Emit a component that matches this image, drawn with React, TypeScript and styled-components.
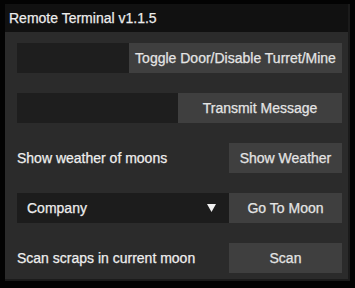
import styled, { createGlobalStyle } from "styled-components";

const GlobalStyle = createGlobalStyle`
  html, body {
    margin: 0;
    padding: 0;
    background: #030303;
  }
  body {
    font-family: "Liberation Sans", Arial, Helvetica, sans-serif;
    -webkit-text-stroke: 0.25px currentColor;
  }
`;

const Page = styled.div`
  width: 355px;
  height: 288px;
  padding: 4px 0 0 5px;
  box-sizing: border-box;
`;

const Window = styled.div`
  width: 343px;
  border-right: 2px solid #1b1b1b;
  border-bottom: 2px solid #1b1b1b;
  display: flex;
  flex-direction: column;
`;

const TitleBar = styled.div`
  height: 28px;
  background: #111111;
  color: #ececec;
  font-size: 14px;
  line-height: 16px;
  display: flex;
  align-items: center;
  padding-left: 4px;
`;

const Panel = styled.div`
  background: #2b2b2b;
  padding: 11px 6px 6px 12px;
  display: flex;
  flex-direction: column;
  gap: 20px;
`;

const Row = styled.div`
  display: flex;
  height: 30px;
  align-items: stretch;
`;

const Field = styled.div`
  flex: 1;
  background: #1e1e1e;
`;

const Button = styled.button<{ $w: number }>`
  width: ${(p) => p.$w}px;
  flex: none;
  border: none;
  margin: 0;
  padding: 0;
  background: #3f3f3f;
  color: #e4e4e4;
  font-family: inherit;
  font-size: 14px;
  line-height: 16px;
  text-align: center;
  white-space: nowrap;
  cursor: pointer;
`;

const Label = styled.div`
  flex: 1;
  display: flex;
  align-items: center;
  color: #eeeeee;
  font-size: 14px;
  line-height: 16px;
`;

const Select = styled.div`
  flex: 1;
  background: #1c1c1c;
  color: #ececec;
  font-size: 14px;
  line-height: 16px;
  display: flex;
  align-items: center;
  justify-content: space-between;
  padding: 0 13px 0 10px;
`;

const Arrow = () => (
  <svg width="9" height="8" viewBox="0 0 9 8">
    <polygon points="0,0 9,0 4.5,8" fill="#f0f0f0" />
  </svg>
);

export default function App() {
  return (
    <>
      <GlobalStyle />
      <Page>
        <Window>
          <TitleBar>Remote Terminal v1.1.5</TitleBar>
          <Panel>
            <Row>
              <Field />
              <Button $w={213}>Toggle Door/Disable Turret/Mine</Button>
            </Row>
            <Row>
              <Field />
              <Button $w={164}>Transmit Message</Button>
            </Row>
            <Row>
              <Label>Show weather of moons</Label>
              <Button $w={113}>Show Weather</Button>
            </Row>
            <Row>
              <Select>
                <span>Company</span>
                <Arrow />
              </Select>
              <Button $w={113}>Go To Moon</Button>
            </Row>
            <Row>
              <Label>Scan scraps in current moon</Label>
              <Button $w={113}>Scan</Button>
            </Row>
          </Panel>
        </Window>
      </Page>
    </>
  );
}
